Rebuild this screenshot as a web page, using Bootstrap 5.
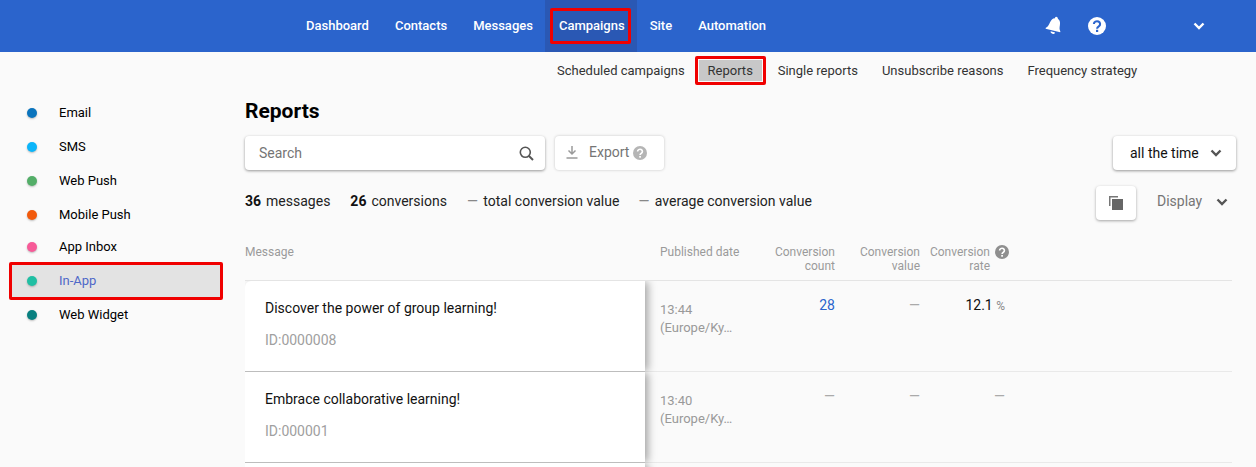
<!doctype html>
<html lang="en">
<head>
<meta charset="utf-8">
<title>Reports</title>
<link href="https://cdn.jsdelivr.net/npm/bootstrap@5.3.0/dist/css/bootstrap.min.css" rel="stylesheet">
<style>
html,body{height:467px;overflow:hidden}
body{font-family:Roboto,"Liberation Sans",sans-serif;font-size:14px;background:#fafafa;color:#000}
.topbar{height:52px;background:#2b64cc}
.topnav{margin-left:293px;height:52px}
.toplink{color:#fff;font-weight:500;font-size:13px;padding:0 13px;height:52px;display:flex;align-items:center;text-decoration:none;white-space:nowrap}
.toplink.current{background:#2a58b4;padding:0 6px 0 5px;margin-left:-1px}
.redbox{border:3px solid #f00000;border-radius:2px;padding:5px 3px 6px 6px;line-height:19px}
.bell{margin-left:266px}
.bell svg{overflow:visible}
.help{margin-left:25px}
.tchev{margin-left:87px}
.subnav{height:36px;padding-left:545px;padding-top:1px}
.sublink{color:#333;font-size:13px;padding:0 12px;text-decoration:none;white-space:nowrap}
.sublink.redbox{padding:0;margin:0 0 0 -2px;height:29px;width:71px;display:flex;align-items:center;justify-content:center;background:#c8c8c8;box-shadow:inset 0 0 0 1px #fafafa}
.bodywrap{height:379px;overflow:hidden}
.sidepanel{width:245px;flex:none;padding-top:8px}
.sideitem{height:34px;padding-left:27px;color:#000;font-size:13px;white-space:nowrap}
.sideitem.short{margin-top:-2px}
.dot{width:10px;height:10px;border-radius:50%;margin-right:22px;flex:none;box-shadow:0 1px 2px rgba(0,0,0,.25)}
.sideitem.sel{margin:-2px 0 -2px 9px;width:214px;padding-left:15px;height:38px;background:#e3e3e3;color:#4f68c8;border:3px solid #f00000;border-radius:2px}
.mainpane{flex:1;min-width:0;padding-right:20px}
.pagetitle{font-size:21px;font-weight:700;line-height:24px;margin:11px 0 13px}
.toolbar{height:34px}
.searchbox{width:300px;height:34px;background:#fff;border-radius:4px;box-shadow:0 1px 3px rgba(0,0,0,.4);padding:0 11px 0 14px;color:#757575;font-size:14px}
.exportbtn{width:109px;height:34px;margin-left:10px;background:#fff;border-radius:4px;box-shadow:0 0 3px rgba(0,0,0,.22);padding-left:11px;padding-bottom:1px;color:#757575;font-size:14px}
.exportlabel{margin-left:11px}
.periodbtn{width:123px;height:34px;background:#fff;border-radius:4px;box-shadow:0 1px 3px rgba(0,0,0,.4);padding-left:17px;font-size:14px;color:#111;white-space:nowrap}
.periodchev{margin-right:14px}
.statsrow{height:34px;margin-top:16px;font-size:14px;color:#222;padding-bottom:3px}
.statitem{margin-right:20px;white-space:nowrap}
.statitem.tight{margin-right:19px}
.statitem b{font-weight:700;color:#111;margin-right:5px}
.dash{color:#888;margin-right:2px}
.copybtn{width:40px;height:34px;margin-bottom:-3px;background:#fff;border-radius:4px;box-shadow:0 1px 3px rgba(0,0,0,.35);margin-right:21px}
.displaytxt{color:#757575;font-size:14px;width:59px}
.displaychev{margin-right:8px}
.tablehead,.tablerow{display:grid;grid-template-columns:400px 105px 85px 85px 70px 1fr;margin-right:4px}
.tablehead{height:49px;margin-top:12px;padding-top:13px;border-bottom:1px solid #e4e4e4;color:#9a9a9a;font-size:12px;line-height:14px;box-sizing:border-box}
.tablerow{height:91px;border-bottom:1px solid #e9e9e9}
.msgcell{background:#fff;padding:17px 20px 0;margin-bottom:-1px;font-size:14px;box-shadow:4px 0 8px -1px rgba(0,0,0,.35);clip-path:inset(0 -14px 0 0);border-bottom:1px solid #bdbdbd;z-index:1;color:#111}
.firstcell{border-top-left-radius:6px}
.msgid{color:#a0a0a0;margin-top:11px;font-size:14px}
.datecell{padding:20px 0 0 15px;color:#999;font-size:13px;line-height:18px}
.numcell{padding-top:15px;text-align:right;font-size:14px;line-height:18px;color:#aaa}
.headdate{padding-left:15px}
.headnum{text-align:right}
.linkval{color:#2b64cc}
.rateval{color:#111}
.pct{color:#888;font-size:12px;margin-right:-15px}
.ratedash{margin-right:-15px}
.headhelp{position:relative}
.headhelp svg{position:absolute;left:100%;top:0;margin-left:5px}
</style>
</head>
<body>
<header class="topbar position-relative d-flex">
  <nav class="topnav d-flex">
    <a class="toplink" href="#">Dashboard</a>
    <a class="toplink" href="#">Contacts</a>
    <a class="toplink" href="#">Messages</a>
    <a class="toplink current" href="#"><span class="redbox">Campaigns</span></a>
    <a class="toplink" href="#">Site</a>
    <a class="toplink" href="#">Automation</a>
    <span class="bell d-flex align-items-center">
      <svg width="18" height="20" viewBox="0 0 18 20"><g transform="rotate(14 9 10)" fill="#fff"><circle cx="9.500" cy="2" r="1.500"/><path d="M9.500 2c3.400 0 4.800 2.500 5 5.600.2 3 .6 4.600 2 6.100v1H1.500v-1c1.700-1.500 2.300-3.200 2.700-6.100C4.700 4.500 6 2 9.500 2z"/><path d="M7 16h4.600a2.300 2 0 0 1-4.600 0z"/></g></svg>
    </span>
    <span class="help d-flex align-items-center">
      <svg width="18" height="18" viewBox="0 0 18 18"><circle cx="9" cy="9" r="9" fill="#fff"/><path d="M5.900 7a3.100 2.800 0 1 1 4.900 2.300c-1.200.8-1.700 1.200-1.700 2.400" fill="none" stroke="#2b64cc" stroke-width="2.100"/><rect x="8" y="12.800" width="2.200" height="2.200" fill="#2b64cc"/></svg>
    </span>
    <span class="tchev d-flex align-items-center">
      <svg width="12" height="8" viewBox="0 0 12 8"><path d="M1.500 1.500 6 6l4.500-4.500" fill="none" stroke="#fff" stroke-width="2.400"/></svg>
    </span>
  </nav>
</header>
<nav class="subnav d-flex align-items-center">
  <a class="sublink" href="#">Scheduled campaigns</a>
  <a class="sublink redbox" href="#">Reports</a>
  <a class="sublink" href="#">Single reports</a>
  <a class="sublink" href="#">Unsubscribe reasons</a>
  <a class="sublink" href="#">Frequency strategy</a>
</nav>
<div class="bodywrap d-flex">
  <aside class="sidepanel">
    <div class="sideitem d-flex align-items-center"><span class="dot" style="background:#0a74bd"></span>Email</div>
    <div class="sideitem d-flex align-items-center"><span class="dot" style="background:#0bb5fa"></span>SMS</div>
    <div class="sideitem d-flex align-items-center"><span class="dot" style="background:#53ae68"></span>Web Push</div>
    <div class="sideitem d-flex align-items-center"><span class="dot" style="background:#f25a0c"></span>Mobile Push</div>
    <div class="sideitem short d-flex align-items-center"><span class="dot" style="background:#f75a98"></span>App Inbox</div>
    <div class="sideitem sel d-flex align-items-center"><span class="dot" style="background:#20bfa3"></span>In-App</div>
    <div class="sideitem d-flex align-items-center"><span class="dot" style="background:#088080"></span>Web Widget</div>
  </aside>
  <main class="mainpane">
    <h1 class="pagetitle">Reports</h1>
    <div class="toolbar d-flex">
      <div class="searchbox d-flex align-items-center justify-content-between">
        <span>Search</span>
        <svg width="15" height="15" viewBox="0 0 15 15"><circle cx="6.300" cy="6.300" r="5" fill="none" stroke="#555" stroke-width="1.600"/><path d="m10 10 4 4" stroke="#555" stroke-width="2"/></svg>
      </div>
      <div class="exportbtn d-flex align-items-center">
        <svg width="12" height="13" viewBox="0 0 12 13"><path d="M6 0v7M2.500 4.500 6 8l3.500-3.500M0.500 12h11" fill="none" stroke="#9a9a9a" stroke-width="1.500"/></svg>
        <span class="exportlabel">Export</span>
        <svg class="ms-1" width="14" height="14" viewBox="0 0 18 18"><circle cx="9" cy="9" r="9" fill="#b5b5b5"/><path d="M5.900 7a3.100 2.800 0 1 1 4.900 2.300c-1.200.8-1.700 1.200-1.700 2.400" fill="none" stroke="#fff" stroke-width="2.100"/><rect x="8" y="12.800" width="2.200" height="2.200" fill="#fff"/></svg>
      </div>
      <div class="periodbtn d-flex align-items-center ms-auto">
        <span>all the time</span>
        <svg class="ms-auto periodchev" width="12" height="8" viewBox="0 0 12 8"><path d="M1.500 1.500 6 6l4.500-4.500" fill="none" stroke="#555" stroke-width="2.400"/></svg>
      </div>
    </div>
    <div class="statsrow d-flex align-items-center">
      <span class="statitem"><b>36</b>messages</span>
      <span class="statitem"><b>26</b>conversions</span>
      <span class="statitem tight"><span class="dash">—</span> total conversion value</span>
      <span class="statitem"><span class="dash">—</span> average conversion value</span>
      <div class="copybtn d-flex align-items-center justify-content-center ms-auto">
        <svg width="14" height="14" viewBox="0 0 14 14"><path d="M0 0h9v1.500H1.500V10H0z" fill="#777"/><rect x="3" y="3" width="11" height="11" fill="#666"/></svg>
      </div>
      <span class="displaytxt">Display</span>
      <svg class="displaychev" width="12" height="8" viewBox="0 0 12 8"><path d="M1.500 1.500 6 6l4.500-4.500" fill="none" stroke="#555" stroke-width="2.400"/></svg>
    </div>
    <div class="tablehead">
      <div>Message</div>
      <div class="headdate">Published date</div>
      <div class="headnum">Conversion<br>count</div>
      <div class="headnum">Conversion<br>value</div>
      <div class="headnum"><span class="headhelp d-block">Conversion<br>rate<svg width="14" height="14" viewBox="0 0 18 18"><circle cx="9" cy="9" r="9" fill="#8f8f8f"/><path d="M5.900 7a3.100 2.800 0 1 1 4.900 2.300c-1.200.8-1.700 1.200-1.700 2.400" fill="none" stroke="#fff" stroke-width="2.100"/><rect x="8" y="12.800" width="2.200" height="2.200" fill="#fff"/></svg></span></div>
      <div></div>
    </div>
    <div class="tablerow">
      <div class="msgcell firstcell">Discover the power of group learning!<div class="msgid">ID:0000008</div></div>
      <div class="datecell">13:44<br>(Europe/Ky…</div>
      <div class="numcell linkval">28</div>
      <div class="numcell">—</div>
      <div class="numcell rateval">12.1 <span class="pct">%</span></div>
      <div></div>
    </div>
    <div class="tablerow">
      <div class="msgcell">Embrace collaborative learning!<div class="msgid">ID:000001</div></div>
      <div class="datecell">13:40<br>(Europe/Ky…</div>
      <div class="numcell">—</div>
      <div class="numcell">—</div>
      <div class="numcell"><span class="ratedash">—</span></div>
      <div></div>
    </div>
    <div class="tablerow">
      <div class="msgcell"></div>
      <div class="datecell"></div>
      <div class="numcell"></div>
      <div class="numcell"></div>
      <div class="numcell"></div>
      <div></div>
    </div>
  </main>
</div>
<script src="https://cdn.jsdelivr.net/npm/bootstrap@5.3.0/dist/js/bootstrap.bundle.min.js"></script>
</body>
</html>
